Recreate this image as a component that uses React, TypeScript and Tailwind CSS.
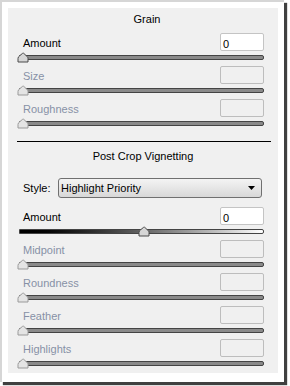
import React from "react";

function Thumb({ left, disabled }: { left: number; disabled?: boolean }) {
  const stroke = disabled ? "#9a9a9a" : "#4a4a4a";
  const fill = disabled ? "#e4e4e4" : "#d6d6d6";
  return (
    <svg
      className="absolute top-[-4px]"
      style={{ left }}
      width="12"
      height="11"
      viewBox="0 0 12 11"
    >
      <path
        d="M1 10 L1 6.5 Q1 4.8 2.6 3.8 L5.6 1.3 Q6.2 0.9 6.8 1.4 L10.4 4.8 Q11 5.4 11 6.5 L11 10 Z"
        fill={fill}
        stroke={stroke}
        strokeWidth="1"
        strokeLinejoin="round"
      />
    </svg>
  );
}

function Row({
  label,
  value,
  enabled,
  thumbX = -3,
  gradient = false,
}: {
  label: string;
  value?: string;
  enabled?: boolean;
  thumbX?: number;
  gradient?: boolean;
}) {
  return (
    <div className="h-[33px] flex flex-col">
      <div className="flex justify-between h-[18px]">
        <span
          className={
            "ml-[4px] mt-px leading-[18px] text-[11px] " +
            (enabled ? "text-black" : "text-[#8790a6]")
          }
        >
          {label}
        </span>
        {enabled ? (
          <div className="w-[44px] h-[18px] border border-[#c4c4c4] bg-white rounded-[2px] pl-[2px] text-[11px] leading-[18px] text-black">
            <span className="relative top-px">{value}</span>
          </div>
        ) : (
          <div className="w-[44px] h-[18px] border border-[#bdbdbd] bg-[#f0f0f0] rounded-[2px]" />
        )}
      </div>
      <div
        className={
          "relative mt-[4px] h-[5px] rounded-r-[2px] border border-[#444444] " +
          (gradient
            ? "bg-linear-to-r from-black to-white"
            : "bg-[#8a8a8a]")
        }
      >
        <Thumb left={thumbX} disabled={!enabled} />
      </div>
    </div>
  );
}

export default function App() {
  return (
    <div className="w-[290px] h-[386px] bg-white font-['Liberation_Sans',Arial,sans-serif]">
      <div className="w-[284px] h-[382px] border-l-2 border-t-2 border-[#d6d6d6] bg-white shadow-[3px_3px_1px_rgba(0,0,0,0.75)] pl-[6px] pt-[6px]">
        <div className="w-[270px] h-[365px] bg-[#f0f0f0] pl-[11px] pr-[14px] pt-[5px]">
          <div className="h-[13px] leading-[13px] text-[11px] text-black text-center pl-[11px]">
            Grain
          </div>
          <div className="mt-[7px]">
            <Row label="Amount" value="0" enabled />
            <Row label="Size" />
            <Row label="Roughness" />
          </div>
          <div className="-ml-[2px] w-[254px] mt-[9px] h-px bg-black" />
          <div className="mt-[8px] h-[13px] leading-[13px] text-[11px] text-black text-center pl-[3px]">
            Post Crop Vignetting
          </div>
          <div className="mt-[15px] flex items-center h-[20px]">
            <span className="ml-[4px] mt-px text-[11px] leading-[13px] text-black w-[35px]">
              Style:
            </span>
            <div className="w-[204px] h-[20px] border border-[#707070] rounded-[3px] bg-linear-to-b from-[#f4f4f4] to-[#d8d8d8] flex items-center justify-between pl-[2px] pr-[6px]">
              <span className="text-[11px] leading-[13px] mt-px text-black">
                Highlight Priority
              </span>
              <svg width="7" height="4" viewBox="0 0 7 4">
                <path d="M0 0 L7 0 L3.5 4 Z" fill="#000" />
              </svg>
            </div>
          </div>
          <div className="mt-[9px]">
            <Row label="Amount" value="0" enabled gradient thumbX={118} />
            <Row label="Midpoint" />
            <Row label="Roundness" />
            <Row label="Feather" />
            <Row label="Highlights" />
          </div>
        </div>
      </div>
    </div>
  );
}
